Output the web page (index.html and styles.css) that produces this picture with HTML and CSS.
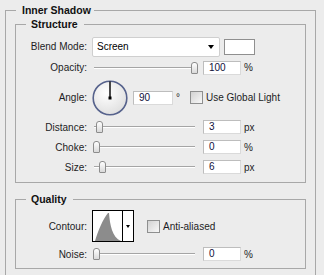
FILE: index.html
```html
<!DOCTYPE html>
<html lang="en">

<head>
    <meta charset="UTF-8">
    <meta name="viewport" content="width=device-width, initial-scale=1.0">
    <title>Inner Shadow</title>
    <link rel="stylesheet" href="styles.css">
</head>

<body>
    <fieldset class="panel">
        <legend class="panel-title">Inner Shadow</legend>

        <fieldset class="group">
            <legend class="group-title">Structure</legend>
            <div class="rows structure-rows">
                <span class="label">Blend Mode:</span>
                <div class="ctrl">
                    <div class="select"><span>Screen</span><span class="caret"></span></div>
                    <div class="swatch"></div>
                </div>

                <span class="label">Opacity:</span>
                <div class="ctrl">
                    <div class="slider"><div class="thumb" style="left: 98px"></div></div>
                    <div class="field">100</div>
                    <span class="unit">%</span>
                </div>

                <span class="label">Angle:</span>
                <div class="ctrl">
                    <svg class="dial" width="36" height="36" viewBox="0 0 36 36">
                        <defs>
                            <radialGradient id="dialFill" cx="40%" cy="35%" r="70%">
                                <stop offset="0" stop-color="#ffffff" />
                                <stop offset="1" stop-color="#dedede" />
                            </radialGradient>
                        </defs>
                        <circle cx="18" cy="18" r="16.8" fill="url(#dialFill)" stroke="#56628c" stroke-width="1.6" />
                        <line x1="18" y1="1.5" x2="18" y2="18" stroke="#000" stroke-width="1.4" />
                        <rect x="16.5" y="16.5" width="3" height="3" fill="#000" />
                    </svg>
                    <div class="field field-wide">90</div>
                    <span class="unit deg">°</span>
                    <label class="check check-global"><span class="box"></span>Use Global Light</label>
                </div>

                <span class="label">Distance:</span>
                <div class="ctrl">
                    <div class="slider"><div class="thumb" style="left: 3px"></div></div>
                    <div class="field">3</div>
                    <span class="unit">px</span>
                </div>

                <span class="label">Choke:</span>
                <div class="ctrl">
                    <div class="slider"><div class="thumb" style="left: 0px"></div></div>
                    <div class="field">0</div>
                    <span class="unit">%</span>
                </div>

                <span class="label">Size:</span>
                <div class="ctrl">
                    <div class="slider"><div class="thumb" style="left: 6px"></div></div>
                    <div class="field">6</div>
                    <span class="unit">px</span>
                </div>
            </div>
        </fieldset>

        <fieldset class="group">
            <legend class="group-title">Quality</legend>
            <div class="rows quality-rows">
                <span class="label">Contour:</span>
                <div class="ctrl">
                    <div class="contour">
                        <svg class="curve" width="29" height="30" viewBox="0 0 29 30">
                            <path d="M2 30 C5 20 10 8 15 2 L16 2 C17 14 19 26 28 30 Z" fill="#8c8c8c" />
                        </svg>
                        <div class="contour-drop"><span class="mini-caret"></span></div>
                    </div>
                    <label class="check check-anti"><span class="box"></span>Anti-aliased</label>
                </div>

                <span class="label">Noise:</span>
                <div class="ctrl">
                    <div class="slider"><div class="thumb" style="left: 0px"></div></div>
                    <div class="field">0</div>
                    <span class="unit">%</span>
                </div>
            </div>
        </fieldset>
    </fieldset>
</body>

</html>
```

FILE: styles.css
```css
html,
body {
    margin: 0;
    overflow: hidden;
}

body {
    background-color: #ececec;
    font-family: 'Liberation Sans', Arial, sans-serif;
    font-size: 10px;
    color: #1c1c24;
}

.panel {
    margin: 4px 8px 0 5px;
    padding: 2px 9px 40px;
    border: 1px solid #a8a8a8;
    min-width: 0;
}

.panel-title {
    margin-left: 1px;
    padding: 0 3px 0 6px;
    font-size: 10.5px;
    font-weight: bold;
    line-height: 12px;
    color: #111;
}

.group {
    margin: 0;
    padding: 6px 0 5px 2px;
    border: 1px solid #a8a8a8;
    min-width: 0;
}

.group + .group {
    margin-top: 10px;
    padding-top: 5px;
    padding-bottom: 2px;
}

.group-title {
    margin-left: 8px;
    padding: 0 6px 0 5px;
    font-size: 10.5px;
    font-weight: bold;
    line-height: 12px;
    color: #111;
}

.rows {
    display: grid;
    grid-template-columns: 69px auto;
    column-gap: 5px;
    align-items: center;
}

.structure-rows {
    grid-template-rows: 21px 21px 39px 20px 20px 20px;
}

.quality-rows {
    grid-template-rows: 32px 24px;
}

.label {
    justify-self: end;
    white-space: nowrap;
}

.ctrl {
    display: flex;
    align-items: center;
}

.select {
    box-sizing: border-box;
    width: 128px;
    height: 20px;
    padding: 0 5px 0 4px;
    display: flex;
    justify-content: space-between;
    align-items: center;
    background-color: #fff;
    border: 1px solid #cfcfcf;
    border-radius: 2px;
    color: #000;
}

.caret {
    width: 0;
    height: 0;
    border-left: 3.5px solid transparent;
    border-right: 3.5px solid transparent;
    border-top: 4px solid #000;
}

.swatch {
    box-sizing: border-box;
    width: 31px;
    height: 16px;
    margin-left: 4px;
    background-color: #fff;
    border: 1px solid #8f8f8f;
}

.slider {
    position: relative;
    width: 106px;
    height: 12px;
    margin-left: 1px;
}

.slider::before {
    content: "";
    position: absolute;
    left: 1px;
    right: 4px;
    top: 5px;
    height: 1px;
    background-color: #a5a5a5;
    border-bottom: 1px solid #fff;
}

.thumb {
    position: absolute;
    top: 0;
    width: 5px;
    height: 10px;
    border: 1px solid #8c8c8c;
    border-radius: 3px 3px 1px 1px;
    background: linear-gradient(#ffffff, #d9d9d9);
}

.field {
    width: 31px;
    height: 12px;
    margin-left: 4px;
    padding-left: 5px;
    background-color: #fff;
    border: 1px solid #dadada;
    border-top-color: #bdbdbd;
    border-left-color: #bdbdbd;
    line-height: 12px;
    color: #10103a;
}

.field-wide {
    width: 33px;
    margin-left: 5px;
}

.unit {
    margin-left: 3px;
}

.deg {
    align-self: flex-start;
    margin-top: 12px;
}

.check {
    display: flex;
    align-items: center;
    gap: 3px;
    white-space: nowrap;
}

.check-global {
    margin-left: 10px;
}

.check-anti {
    margin-left: 13px;
}

.box {
    box-sizing: border-box;
    width: 13px;
    height: 13px;
    border: 1px solid #8e8f8f;
    background: linear-gradient(135deg, #d2d2d2, #f8f8f8);
}

.dial {
    display: block;
}

.contour {
    box-sizing: border-box;
    display: flex;
    width: 42px;
    height: 32px;
    background-color: #fff;
    border: 1px solid #000;
}

.curve {
    display: block;
    border-right: 1px solid #000;
}

.contour-drop {
    flex: 1;
    display: flex;
    align-items: center;
    justify-content: center;
}

.mini-caret {
    width: 0;
    height: 0;
    border-left: 2.5px solid transparent;
    border-right: 2.5px solid transparent;
    border-top: 3px solid #000;
}
```
